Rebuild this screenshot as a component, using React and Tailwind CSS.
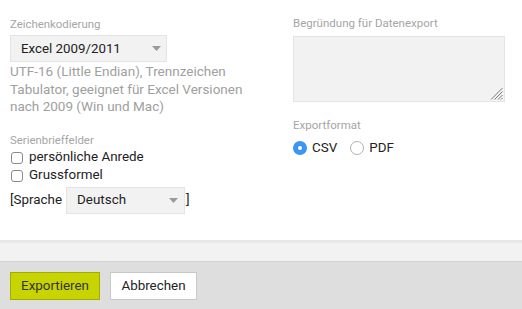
import React from "react";

function Arrow() {
  return (
    <svg width="9" height="5" viewBox="0 0 9 5" className="shrink-0">
      <path d="M0 0 L9 0 L4.5 5 Z" fill="#9a9a9a" />
    </svg>
  );
}

function Checkbox({ label }) {
  return (
    <div className="flex items-center h-[18px]">
      <span className="w-[12px] h-[12px] ml-px rounded-[3px] border border-[#8a8a8a] bg-white" />
      <span className="ml-[6px] text-[13.4px] text-[#222]">{label}</span>
    </div>
  );
}

export default function App() {
  return (
    <div
      className="w-[522px] h-[309px] bg-white flex flex-col overflow-hidden"
      style={{ fontFamily: "Roboto, 'Liberation Sans', sans-serif" }}
    >
      <div className="h-[240px] flex pl-[10px]">
        {/* left column */}
        <div className="w-[283px] flex flex-col">
          <div className="mt-[17px] h-[14px] leading-[14px] text-[11.4px] text-[#a5a5a5]">
            Zeichenkodierung
          </div>
          <div className="mt-[4px] w-[157px] h-[27px] bg-[#f2f2f2] border border-[#e4e4e4] flex items-center justify-between pl-[10px] pr-[5px]">
            <span className="text-[13.3px] text-[#222]">Excel 2009/2011</span>
            <Arrow />
          </div>
          <div className="mt-px text-[13.5px] leading-[17.5px] text-[#a0a0a0]">
            UTF-16 (Little Endian), Trennzeichen
            <br />
            Tabulator, geeignet für Excel Versionen
            <br />
            nach 2009 (Win und Mac)
          </div>
          <div className="mt-[17px] h-[14px] leading-[14px] text-[11.4px] text-[#a5a5a5]">
            Serienbrieffelder
          </div>
          <div className="mt-[2px]">
            <Checkbox label="persönliche Anrede" />
            <Checkbox label="Grussformel" />
          </div>
          <div className="mt-[2px] flex items-center text-[13.4px] text-[#222]">
            <span>[Sprache</span>
            <div className="ml-[4px] w-[119px] h-[27px] bg-[#f2f2f2] border border-[#e4e4e4] flex items-center justify-between pl-[10px] pr-[6px]">
              <span>Deutsch</span>
              <Arrow />
            </div>
            <span className="ml-px">]</span>
          </div>
        </div>
        {/* right column */}
        <div className="w-[212px] flex flex-col">
          <div className="mt-[16px] h-[14px] leading-[14px] text-[11.5px] text-[#a5a5a5]">
            Begründung für Datenexport
          </div>
          <div className="mt-[6px] h-[66px] bg-[#f2f2f2] border border-[#e4e4e4] flex items-end justify-end p-[1px]">
            <svg width="13" height="13" viewBox="0 0 13 13">
              <g stroke="#7a7a7a" strokeWidth="1">
                <line x1="1" y1="12.5" x2="12.5" y2="1" />
                <line x1="4.5" y1="12.5" x2="12.5" y2="4.5" />
                <line x1="8" y1="12.5" x2="12.5" y2="8" />
                <line x1="11" y1="12.5" x2="12.5" y2="11" />
              </g>
            </svg>
          </div>
          <div className="mt-[16px] h-[14px] leading-[14px] text-[11.5px] text-[#a5a5a5]">
            Exportformat
          </div>
          <div className="mt-[7px] flex items-center h-[18px] text-[13.4px] text-[#222]">
            <span className="w-[14px] h-[14px] rounded-full bg-[#3b95f5] flex items-center justify-center">
              <span className="w-[4px] h-[4px] rounded-full bg-white" />
            </span>
            <span className="ml-[5px]">CSV</span>
            <span className="ml-[13px] w-[14px] h-[14px] rounded-full border border-[#b0b0b0] bg-white" />
            <span className="ml-[5px]">PDF</span>
          </div>
        </div>
      </div>
      <div className="h-[3px] bg-[#e8e8e8]" />
      <div className="h-[19px] bg-[#f2f2f2] border-b border-[#d2d2d2]" />
      <div className="flex-1 bg-[#dedede] flex items-start pt-[10px] pl-[10px] gap-[10px]">
        <button className="w-[90px] h-[28px] bg-[#c8d400] border border-[#a3ac00] text-[13.4px] text-[#333]">
          Exportieren
        </button>
        <button className="w-[87px] h-[28px] bg-white border border-[#c9c9c9] text-[13.4px] text-[#222]">
          Abbrechen
        </button>
      </div>
    </div>
  );
}
